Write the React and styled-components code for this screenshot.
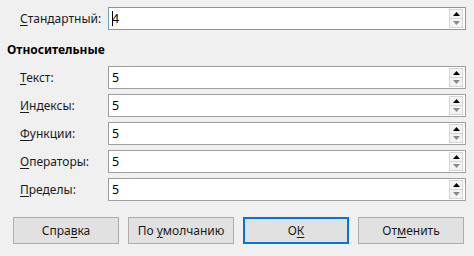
import React from 'react';
import styled, { createGlobalStyle } from 'styled-components';

const GlobalStyle = createGlobalStyle`
  html, body {
    margin: 0;
    padding: 0;
    background: #f0f0f0;
  }
  body {
    font-family: 'Noto Sans', 'Open Sans', 'Liberation Sans', sans-serif;
    font-size: 12px;
    color: #000;
  }
`;

const rows = [
  { key: 'Т', rest: 'екст:', value: '5' },
  { key: 'И', rest: 'ндексы:', value: '5' },
  { key: 'Ф', rest: 'ункции:', value: '5' },
  { key: 'О', rest: 'ператоры:', value: '5' },
  { key: 'П', rest: 'ределы:', value: '5' },
];

const buttons = [
  { before: 'Спра', key: 'в', after: 'ка' },
  { before: 'По ', key: 'у', after: 'молчанию' },
  { before: 'О', key: 'К', after: '', primary: true },
  { before: 'От', key: 'м', after: 'енить' },
];

const Spinner = () => (
  <Spin>
    <SpinButton>
      <svg width="7" height="4" viewBox="0 0 7 4">
        <path d="M0 4 L3.5 0 L7 4 Z" fill="#000" />
      </svg>
    </SpinButton>
    <SpinButton>
      <svg width="7" height="4" viewBox="0 0 7 4">
        <path d="M0 0 L3.5 4 L7 0 Z" fill="#8a8a8a" />
      </svg>
    </SpinButton>
  </Spin>
);

const Field = ({ value, focused }) => (
  <Input focused={focused}>
    <Value>
      {focused && <Caret />}
      {value}
    </Value>
    <Spinner />
  </Input>
);

const App = () => (
  <>
    <GlobalStyle />
    <Dialog>
      <Row>
        <Label>
          <u>С</u>тандартный:
        </Label>
        <Field value="4" focused />
      </Row>
      <Heading>Относительные</Heading>
      <Rows>
        {rows.map(row => (
          <Row key={row.rest}>
            <Label>
              <u>{row.key}</u>
              {row.rest}
            </Label>
            <Field value={row.value} />
          </Row>
        ))}
      </Rows>
      <Buttons>
        {buttons.map(b => (
          <Button key={b.before + b.key} primary={b.primary}>
            <span>
              {b.before}
              <u>{b.key}</u>
              {b.after}
            </span>
          </Button>
        ))}
      </Buttons>
    </Dialog>
  </>
);

const Dialog = styled.div`
  width: 474px;
  height: 256px;
  box-sizing: border-box;
  padding: 7px 8px 0 0;
  background: #f0f0f0;
`;

const Rows = styled.div`
  display: flex;
  flex-direction: column;
  gap: 5px;
`;

const Row = styled.div`
  display: grid;
  grid-template-columns: 88px 1fr;
  align-items: center;
  padding-left: 20px;
`;

const Label = styled.span`
  white-space: nowrap;
  color: #1a1a1a;
  u {
    text-underline-offset: 2px;
  }
`;

const Heading = styled.div`
  font-weight: bold;
  padding-left: 7px;
  margin: 11px 0 8px;
  line-height: 17px;
`;

const Input = styled.div`
  height: 23px;
  box-sizing: border-box;
  display: flex;
  align-items: center;
  background: #fff;
  border: 1px solid ${p => (p.focused ? '#6f9bc4' : '#a0a0a0')};
  padding: 0 2px 0 3px;
`;

const Value = styled.span`
  flex: 1;
  display: flex;
  align-items: center;
  font-size: 12.5px;
`;

const Caret = styled.span`
  display: inline-block;
  width: 1px;
  height: 15px;
  background: #000;
  margin-right: -1px;
`;

const Spin = styled.div`
  display: flex;
  flex-direction: column;
  width: 14px;
  height: 19px;
`;

const SpinButton = styled.div`
  flex: 1;
  display: flex;
  align-items: center;
  justify-content: center;
  background: #f4f4f4;
  border: 1px solid #d6d6d6;
  & + & {
    border-top: none;
  }
`;

const Buttons = styled.div`
  display: flex;
  gap: 9px;
  padding-left: 13px;
  margin-top: 16px;
`;

const Button = styled.div`
  width: 106px;
  height: 27px;
  box-sizing: border-box;
  display: flex;
  align-items: center;
  justify-content: center;
  background: #e1e1e1;
  border: ${p => (p.primary ? '2px solid #0078d7' : '1px solid #adadad')};
  color: #1a1a1a;
  white-space: pre;
  u {
    text-underline-offset: 2px;
  }
`;

export default App;
